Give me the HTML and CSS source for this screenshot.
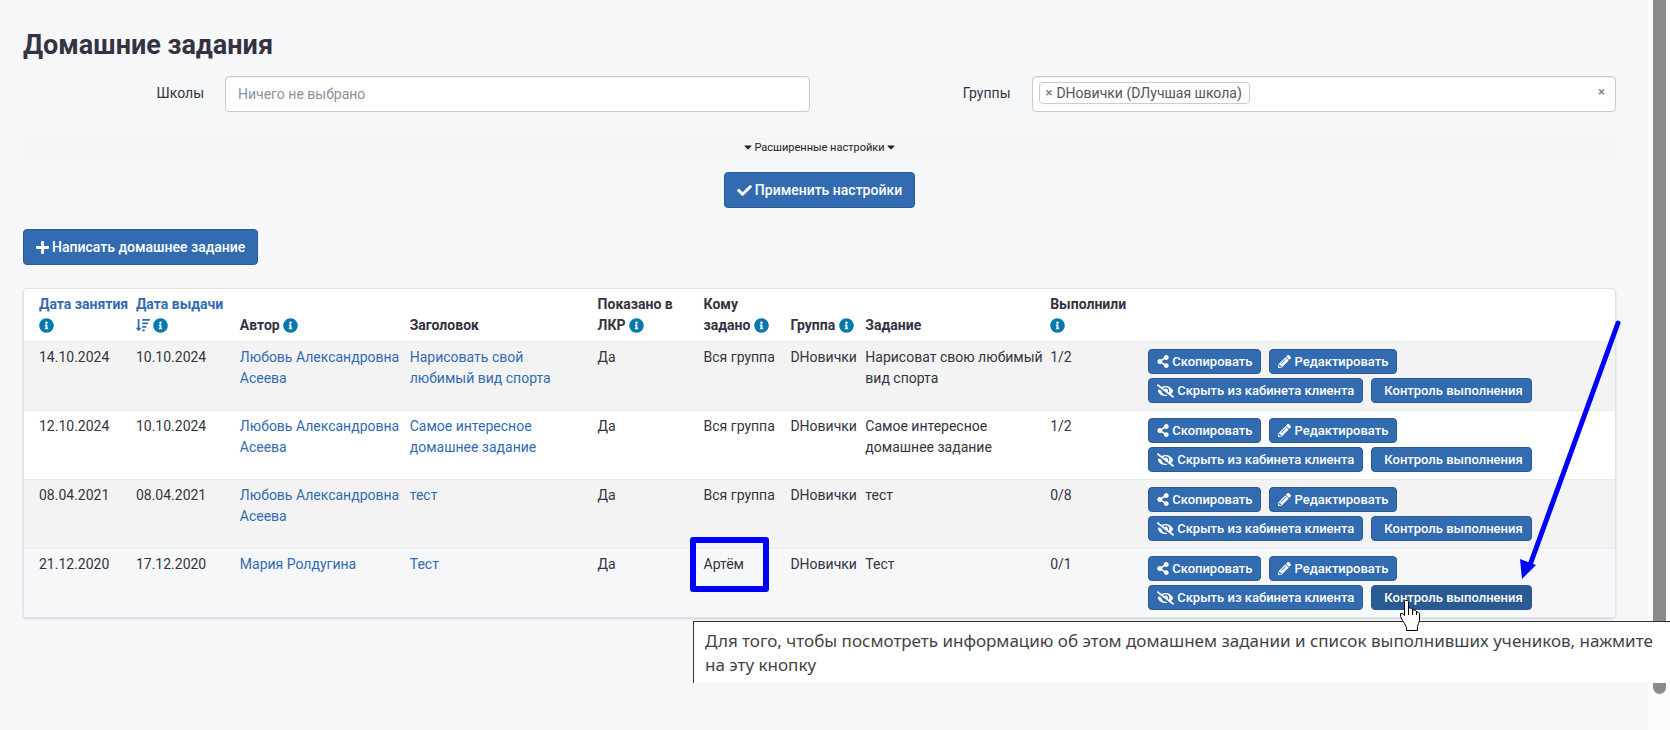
FILE: index.html
```html
<!DOCTYPE html>
<html lang="ru">
<head>
<meta charset="utf-8">
<meta name="viewport" content="width=device-width, initial-scale=1">
<title>Домашние задания</title>
<link rel="stylesheet" href="styles.css">
</head>
<body>
<svg class="sprite" aria-hidden="true">
  <symbol id="check" viewBox="0 0 512 512"><path d="M173.898 439.404l-166.4-166.4c-9.997-9.997-9.997-26.206 0-36.204l36.203-36.204c9.997-9.998 26.207-9.998 36.204 0L192 312.69 432.095 72.596c9.997-9.997 26.207-9.997 36.204 0l36.203 36.204c9.997 9.997 9.997 26.206 0 36.204l-294.4 294.401c-9.998 9.997-26.207 9.997-36.204-.001z"/></symbol>
  <symbol id="plus" viewBox="0 0 448 512"><path d="M416 208H272V64c0-17.67-14.33-32-32-32h-32c-17.67 0-32 14.33-32 32v144H32c-17.67 0-32 14.33-32 32v32c0 17.67 14.33 32 32 32h144v144c0 17.67 14.33 32 32 32h32c17.67 0 32-14.33 32-32V304h144c17.67 0 32-14.33 32-32v-32c0-17.67-14.33-32-32-32z"/></symbol>
  <symbol id="info" viewBox="0 0 512 512"><path d="M256 8C119.043 8 8 119.083 8 256c0 136.997 111.043 248 248 248s248-111.003 248-248C504 119.083 392.957 8 256 8zm0 110c23.196 0 42 18.804 42 42s-18.804 42-42 42-42-18.804-42-42 18.804-42 42-42zm56 254c0 6.627-5.373 12-12 12h-88c-6.627 0-12-5.373-12-12v-24c0-6.627 5.373-12 12-12h12v-64h-12c-6.627 0-12-5.373-12-12v-24c0-6.627 5.373-12 12-12h64c6.627 0 12 5.373 12 12v100h12c6.627 0 12 5.373 12 12v24z"/></symbol>
  <symbol id="share" viewBox="0 0 448 512"><path d="M352 320c-22.608 0-43.387 7.819-59.79 20.895l-102.486-64.054a96.551 96.551 0 0 0 0-41.683l102.486-64.054C308.613 184.181 329.392 192 352 192c53.019 0 96-42.981 96-96S405.019 0 352 0s-96 42.981-96 96c0 7.158.79 14.13 2.276 20.841L155.79 180.895C139.387 167.819 118.608 160 96 160c-53.019 0-96 42.981-96 96s42.981 96 96 96c22.608 0 43.387-7.819 59.79-20.895l102.486 64.054A96.301 96.301 0 0 0 256 416c0 53.019 42.981 96 96 96s96-42.981 96-96-42.981-96-96-96z"/></symbol>
  <symbol id="pencil" viewBox="0 0 512 512"><path d="M497.9 142.1l-46.1 46.1c-4.7 4.7-12.3 4.7-17 0l-111-111c-4.7-4.7-4.7-12.3 0-17l46.1-46.1c18.7-18.7 49.1-18.7 67.9 0l60.1 60.1c18.8 18.7 18.8 49.1 0 67.9zM284.2 99.8L21.6 362.4.4 483.9c-2.9 16.4 11.4 30.6 27.8 27.8l121.5-21.3 262.6-262.6c4.7-4.7 4.7-12.3 0-17l-111-111c-4.8-4.7-12.4-4.7-17.1 0zM124.1 339.9c-5.5-5.5-5.5-14.3 0-19.8l154-154c5.5-5.5 14.3-5.5 19.8 0s5.5 14.3 0 19.8l-154 154c-5.5 5.5-14.3 5.5-19.8 0zM88 424h48v36.3l-64.5 11.3-31.1-31.1L51.7 376H88v48z"/></symbol>
  <symbol id="eye-off" viewBox="0 0 640 512"><path d="M320 400c-75.85 0-137.25-58.71-142.9-133.11L72.2 185.82c-13.79 17.3-26.48 35.59-36.72 55.59a32.35 32.35 0 0 0 0 29.19C89.71 376.41 197.07 448 320 448c26.91 0 52.87-4 77.89-10.46L346 397.39a144.13 144.13 0 0 1-26 2.61zm313.82 58.1l-110.55-85.44a331.25 331.25 0 0 0 81.25-102.07 32.35 32.35 0 0 0 0-29.19C550.29 135.59 442.93 64 320 64a308.15 308.15 0 0 0-147.32 37.7L45.46 3.37A16 16 0 0 0 23 6.18L3.37 31.45A16 16 0 0 0 6.18 53.9l588.36 454.73a16 16 0 0 0 22.46-2.81l19.64-25.27a16 16 0 0 0-2.82-22.45zm-183.72-142l-39.3-30.38A94.75 94.75 0 0 0 416 256a94.76 94.76 0 0 0-121.31-92.21A47.65 47.65 0 0 1 304 192a46.64 46.64 0 0 1-1.54 10l-73.61-56.89A142.31 142.31 0 0 1 320 112a143.92 143.92 0 0 1 144 144c0 21.63-5.29 41.79-13.9 60.11z"/></symbol>
  <symbol id="sort" viewBox="0 0 512 512"><path d="M304 416h-64a16 16 0 0 0-16 16v32a16 16 0 0 0 16 16h64a16 16 0 0 0 16-16v-32a16 16 0 0 0-16-16zm-128-64h-48V48a16 16 0 0 0-16-16H80a16 16 0 0 0-16 16v304H16c-14.19 0-21.37 17.24-11.29 27.31l80 96a16 16 0 0 0 22.62 0l80-96C197.35 369.26 190.22 352 176 352zm256-192H240a16 16 0 0 0-16 16v32a16 16 0 0 0 16 16h192a16 16 0 0 0 16-16v-32a16 16 0 0 0-16-16zm-64 128H240a16 16 0 0 0-16 16v32a16 16 0 0 0 16 16h128a16 16 0 0 0 16-16v-32a16 16 0 0 0-16-16zM496 32H240a16 16 0 0 0-16 16v32a16 16 0 0 0 16 16h256a16 16 0 0 0 16-16V48a16 16 0 0 0-16-16z"/></symbol>
  <symbol id="caret" viewBox="0 0 320 512"><path d="M31.3 192h257.3c17.8 0 26.7 21.5 14.1 34.1L174.1 354.8c-7.8 7.8-20.5 7.8-28.3 0L17.2 226.1C4.6 213.5 13.5 192 31.3 192z"/></symbol>
</svg>

<div class="page">
  <main class="content">
    <h1 class="title">Домашние задания</h1>

    <form class="filters">
      <div class="fields">
        <div class="field">
          <label class="field-label" for="schools">Школы</label>
          <input class="control" id="schools" type="text" placeholder="Ничего не выбрано">
        </div>
        <div class="field">
          <label class="field-label" for="groups">Группы</label>
          <div class="control multi">
            <span class="tag"><button class="remove" type="button" aria-label="Убрать группу">×</button>DНовички (DЛучшая школа)</span>
            <input class="multi-input" id="groups" type="text">
            <button class="remove" type="button" aria-label="Очистить">×</button>
          </div>
        </div>
      </div>
      <button class="expander" type="button"><svg class="icon-caret"><use href="#caret"/></svg> Расширенные настройки <svg class="icon-caret"><use href="#caret"/></svg></button>
      <button class="btn apply" type="button"><svg class="icon"><use href="#check"/></svg>Применить настройки</button>
    </form>

    <button class="btn" type="button"><svg class="icon icon-plus"><use href="#plus"/></svg>Написать домашнее задание</button>

    <div class="panel">
      <table class="tasks">
        <colgroup>
          <col class="c-lesson"><col class="c-issued"><col class="c-author"><col class="c-name"><col class="c-shown"><col class="c-whom"><col class="c-group"><col class="c-task"><col class="c-done"><col>
        </colgroup>
        <thead>
          <tr>
            <th><a href="#">Дата занятия</a> <svg class="info"><use href="#info"/></svg></th>
            <th><a href="#">Дата выдачи</a><br><a href="#" aria-label="Сортировка"><svg class="sort"><use href="#sort"/></svg></a> <svg class="info"><use href="#info"/></svg></th>
            <th>Автор <svg class="info"><use href="#info"/></svg></th>
            <th>Заголовок</th>
            <th>Показано в<br>ЛКР <svg class="info"><use href="#info"/></svg></th>
            <th>Кому<br>задано <svg class="info"><use href="#info"/></svg></th>
            <th class="nowrap">Группа <svg class="info"><use href="#info"/></svg></th>
            <th>Задание</th>
            <th>Выполнили<br><svg class="info"><use href="#info"/></svg></th>
            <th></th>
          </tr>
        </thead>
        <tbody>
          <tr>
            <td>14.10.2024</td><td>10.10.2024</td>
            <td><a href="#">Любовь Александровна Асеева</a></td>
            <td><a href="#">Нарисовать свой<br>любимый вид спорта</a></td>
            <td>Да</td><td class="nowrap">Вся группа</td><td class="nowrap">DНовички</td>
            <td>Нарисоват свою любимый вид спорта</td><td>1/2</td>
            <td class="actions"><div class="btn-row"><button class="btn small" type="button"><svg class="icon icon-share"><use href="#share"/></svg>Скопировать</button><button class="btn small" type="button"><svg class="icon"><use href="#pencil"/></svg>Редактировать</button></div><div class="btn-row"><button class="btn small" type="button"><svg class="icon icon-eye"><use href="#eye-off"/></svg>Скрыть из кабинета клиента</button><button class="btn small plain" type="button">Контроль выполнения</button></div></td>
          </tr>
          <tr>
            <td>12.10.2024</td><td>10.10.2024</td>
            <td><a href="#">Любовь Александровна Асеева</a></td>
            <td><a href="#">Самое интересное<br>домашнее задание</a></td>
            <td>Да</td><td class="nowrap">Вся группа</td><td class="nowrap">DНовички</td>
            <td>Самое интересное домашнее задание</td><td>1/2</td>
            <td class="actions"><div class="btn-row"><button class="btn small" type="button"><svg class="icon icon-share"><use href="#share"/></svg>Скопировать</button><button class="btn small" type="button"><svg class="icon"><use href="#pencil"/></svg>Редактировать</button></div><div class="btn-row"><button class="btn small" type="button"><svg class="icon icon-eye"><use href="#eye-off"/></svg>Скрыть из кабинета клиента</button><button class="btn small plain" type="button">Контроль выполнения</button></div></td>
          </tr>
          <tr>
            <td>08.04.2021</td><td>08.04.2021</td>
            <td><a href="#">Любовь Александровна Асеева</a></td>
            <td><a href="#">тест</a></td>
            <td>Да</td><td class="nowrap">Вся группа</td><td class="nowrap">DНовички</td>
            <td>тест</td><td>0/8</td>
            <td class="actions"><div class="btn-row"><button class="btn small" type="button"><svg class="icon icon-share"><use href="#share"/></svg>Скопировать</button><button class="btn small" type="button"><svg class="icon"><use href="#pencil"/></svg>Редактировать</button></div><div class="btn-row"><button class="btn small" type="button"><svg class="icon icon-eye"><use href="#eye-off"/></svg>Скрыть из кабинета клиента</button><button class="btn small plain" type="button">Контроль выполнения</button></div></td>
          </tr>
          <tr class="current">
            <td>21.12.2020</td><td>17.12.2020</td>
            <td><a href="#">Мария Ролдугина</a></td>
            <td><a href="#">Тест</a></td>
            <td>Да</td><td class="marked">Артём<span class="frame"></span></td><td class="nowrap">DНовички</td>
            <td>Тест</td><td>0/1</td>
            <td class="actions"><div class="btn-row"><button class="btn small" type="button"><svg class="icon icon-share"><use href="#share"/></svg>Скопировать</button><button class="btn small" type="button"><svg class="icon"><use href="#pencil"/></svg>Редактировать</button></div><div class="btn-row"><button class="btn small" type="button"><svg class="icon icon-eye"><use href="#eye-off"/></svg>Скрыть из кабинета клиента</button><button class="btn small plain active" type="button">Контроль выполнения</button></div></td>
          </tr>
        </tbody>
      </table>
    </div>
  </main>
  <div class="scrollbar"><div class="thumb"></div></div>

  <svg class="arrow" viewBox="0 0 104 264" aria-hidden="true"><path d="M99 6 11 248" fill="none" stroke="#00f" stroke-width="5" stroke-linecap="round"/><path d="M1 242 3 262 17 248Z" fill="#00f"/></svg>
  <p class="note">Для того, чтобы посмотреть информацию об этом домашнем задании и список выполнивших учеников, нажмите на эту кнопку</p>
  <svg class="cursor" viewBox="0 0 22 32" aria-hidden="true"><path d="M6.500 1.500h2l1 1v6l3 1 1 1 3 1 1 1 2 1 1 1v7l-1 3-1 3v4h-11v-3l-2-4-2-3-2-4v-3h2l2 2V2.500Z" fill="#fff" stroke="#000"/><path d="M9.500 8v8M13.500 10v6M17.500 12v4" stroke="#000"/></svg>
</div>
</body>
</html>
```
FILE: styles.css
```css
* { box-sizing: border-box; }

body {
  margin: 0;
  background: #f6f7f9;
  color: #333342;
  font: 14px/21px Roboto, "Liberation Sans", sans-serif;
}

a { color: #326bb0; text-decoration: none; }
button, input { font: inherit; color: inherit; }
.sprite { display: none; }

.page {
  position: relative;
  display: flex;
  min-height: 100vh;
  overflow: hidden;
}

.content { flex: 1; min-width: 0; padding: 28px 32px 0 23px; }

.scrollbar { width: 22px; padding: 0 4px 0 5px; background: #fcfcfc; }
.thumb { height: 95vh; background: #8b8b8b; border-radius: 0 0 7px 7px; }

.title { margin: 0 0 14px; font-size: 27px; line-height: 34px; font-weight: 700; }

.filters { display: flex; flex-direction: column; margin-bottom: 21px; }
.fields { display: flex; gap: 20px; margin-bottom: 26px; }
.field { flex: 1; display: flex; gap: 21px; }
.field-label { width: 181px; padding-top: 7px; text-align: right; }

.control {
  flex: 1;
  min-width: 0;
  height: 36px;
  padding: 0 12px;
  border: 1px solid #ccc;
  border-radius: 4px;
  background: #fff;
  box-shadow: inset 0 1px 1px rgba(0, 0, 0, .075);
}
.control::placeholder { color: #8b90a0; opacity: 1; }

.multi { display: flex; align-items: flex-start; gap: 5px; padding: 5px 10px 0 6px; color: #555; }
.tag {
  display: flex;
  gap: 4px;
  height: 22px;
  padding: 0 7px 0 6px;
  border: 1px solid #ccc;
  border-radius: 4px;
  line-height: 20px;
}
.multi-input { flex: 1; min-width: 0; height: 22px; padding: 0; border: 0; outline: 0; background: none; }
.remove { padding: 0; border: 0; background: none; color: #888; font-size: 13px; font-weight: 700; line-height: 20px; }

.expander {
  height: 20px;
  margin-bottom: 14px;
  padding: 0;
  border: 0;
  background: #f5f5f5;
  font-size: 11px;
  line-height: 18px;
  color: #222;
}
.icon-caret { width: 8px; height: 12px; vertical-align: -2px; fill: currentColor; }

.btn {
  display: inline-flex;
  align-items: center;
  gap: 3px;
  height: 36px;
  padding: 0 12px;
  border: 1px solid #2a5a94;
  border-radius: 4px;
  background: #326bb0;
  color: #fff;
  font-weight: 500;
  white-space: nowrap;
}
.apply { align-self: center; }
.icon { width: 15px; height: 15px; fill: currentColor; }
.icon-plus { width: 13px; }

.small { height: 25px; padding: 0 8px; font-size: 13px; line-height: 20px; }
.small .icon { width: 13px; height: 13px; }
.small .icon-share { width: 12px; }
.small .icon-eye { width: 17px; height: 14px; }
.small.plain { padding-left: 12px; }
.active { background: #2a5a94; }

.panel {
  margin-top: 23px;
  border: 1px solid #e0e2e6;
  border-radius: 4px;
  background: #fff;
  box-shadow: 0 1px 2px rgba(0, 0, 0, .15);
}
.tasks { width: 100%; table-layout: fixed; border-collapse: separate; border-spacing: 0; }
.c-lesson { width: 6.72%; }
.c-issued { width: 6.53%; }
.c-author { width: 10.68%; }
.c-name { width: 11.81%; }
.c-shown { width: 6.66%; }
.c-whom { width: 5.46%; }
.c-group { width: 4.71%; }
.c-task { width: 11.62%; }
.c-done { width: 6.16%; }

th { padding: 5px 0 5px 5px; text-align: left; vertical-align: bottom; font-weight: 700; }
td { padding: 5px 0 0 5px; vertical-align: top; border-top: 1px solid #e9eaec; }
th:first-child, td:first-child { padding-left: 15px; }
.nowrap { white-space: nowrap; }
tbody tr:nth-child(odd) { background: #f3f3f3; }
tbody .current { background: #f6f7f9; }

.info { width: 15px; height: 15px; vertical-align: -3px; fill: #0578ae; }
.sort { width: 14px; height: 14px; vertical-align: -2px; fill: #326bb0; }

.actions { padding: 7px 5px; }
.btn-row { display: flex; gap: 8px; }
.btn-row + .btn-row { margin-top: 4px; }

.marked { position: relative; }
.frame {
  position: absolute;
  top: -12px;
  left: -9px;
  width: 79px;
  height: 55px;
  border: 6px solid #00f;
  border-radius: 3px;
}

.arrow { position: absolute; top: 317px; right: 47px; width: 104px; height: 264px; }
.cursor { position: absolute; top: 599px; right: 249px; width: 22px; height: 32px; }
.note {
  position: absolute;
  top: 621px;
  left: 693px;
  right: 0;
  height: 62px;
  margin: 0;
  padding: 7px 12px 0 11px;
  border-top: 1px solid #333;
  border-left: 1px solid #333;
  background: #fff;
  color: #444;
  font: 17px/24px "Noto Sans", "Open Sans", sans-serif;
}
```
